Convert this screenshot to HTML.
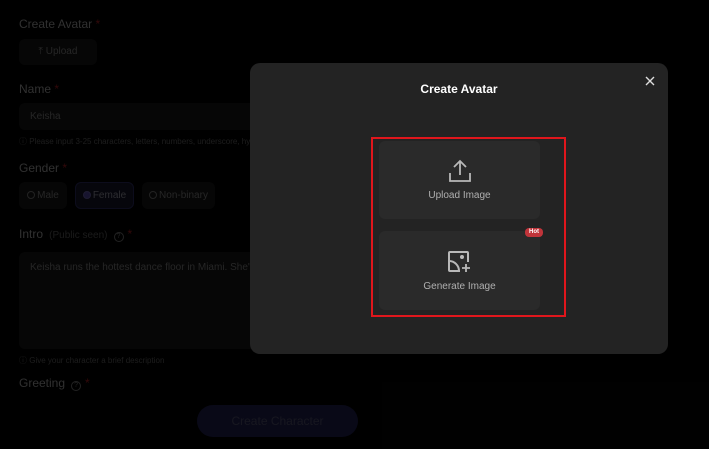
<!DOCTYPE html>
<html><head><meta charset="utf-8"><style>
*{margin:0;padding:0;box-sizing:border-box}
body{width:709px;height:449px;background:#030303;font-family:"Liberation Sans",sans-serif;position:relative;overflow:hidden}
.a{position:absolute}
.lbl{color:#d8d8d8;font-size:12px}
.req{color:#e0262c}
.box{background:#1e1e1e;border-radius:6px}
.hint{color:#808080;font-size:8px}
.ov{left:0;top:0;width:709px;height:449px;background:rgba(0,0,0,0.78)}
.modal{left:250px;top:63px;width:418px;height:291px;background:#232323;border-radius:10px}
.card{background:#2a2a2a;border-radius:6px;width:161px;color:#b0b0b0;font-size:10px;text-align:center}
.rd{display:inline-block;width:8px;height:8px;border:1px solid #999;border-radius:50%;vertical-align:-1px;margin-right:2px}
.q{display:inline-block;width:10px;height:10px;border:1px solid #999;border-radius:50%;font-size:7px;line-height:8px;text-align:center;color:#999;vertical-align:0;margin:0 4px 0 6px}
</style></head><body>
<div class="a lbl" style="left:19px;top:17px">Create Avatar <span class="req">*</span></div>
<div class="a box" style="left:19px;top:39px;width:78px;height:26px;color:#aaa;font-size:10px;line-height:26px;text-align:center">⤒ Upload</div>
<div class="a lbl" style="left:19px;top:82px">Name <span class="req">*</span></div>
<div class="a box" style="left:19px;top:103px;width:240px;height:27px;color:#aaa;font-size:10px;line-height:27px;padding-left:11px">Keisha</div>
<div class="a hint" style="left:19px;top:136px;white-space:nowrap">ⓘ Please input 3-25 characters, letters, numbers, underscore, hy</div>
<div class="a lbl" style="left:19px;top:161px">Gender <span class="req">*</span></div>
<div class="a box" style="left:19px;top:182px;width:48px;height:27px;color:#aaa;font-size:10px;line-height:27px;text-align:center"><span class="rd"></span>Male</div>
<div class="a" style="left:75px;top:182px;width:59px;height:27px;background:#1c1c3a;border:1px solid #3a3a80;border-radius:6px;color:#c8c8d8;font-size:10px;line-height:25px;text-align:center"><span class="rd" style="background:#6b5cd6;border-color:#8a80e0"></span>Female</div>
<div class="a box" style="left:142px;top:182px;width:73px;height:27px;color:#aaa;font-size:10px;line-height:27px;text-align:center"><span class="rd"></span>Non-binary</div>
<div class="a lbl" style="left:19px;top:227px">Intro <span style="color:#777;font-size:10px">&nbsp;(Public seen)</span><span class="q">?</span><span class="req">*</span></div>
<div class="a box" style="left:19px;top:252px;width:240px;height:97px;color:#aaa;font-size:10px;padding:10px 11px;white-space:nowrap">Keisha runs the hottest dance floor in Miami. She's ge</div>
<div class="a hint" style="left:19px;top:355px">ⓘ Give your character a brief description</div>
<div class="a lbl" style="left:19px;top:376px">Greeting<span class="q">?</span><span class="req">*</span></div>
<div class="a" style="left:197px;top:405px;width:161px;height:32px;background:#2a2a6a;border-radius:16px;color:#6a6a90;font-size:12px;line-height:32px;text-align:center">Create Character</div>
<div class="a ov"></div>

<div class="a modal">
  <div class="a" style="left:0;width:418px;top:19px;text-align:center;color:#fff;font-weight:bold;font-size:12px">Create Avatar</div>
  <svg class="a" style="left:395px;top:13px" width="10" height="10" viewBox="0 0 10 10"><path d="M1 1L9 9M9 1L1 9" stroke="#ddd" stroke-width="1.4"/></svg>
  <div class="a" style="left:121px;top:74px;width:195px;height:180px;border:2px solid #e0161c"></div>
  <div class="a card" style="left:129px;top:78px;height:78px">
    <svg class="a" style="left:69px;top:18px" width="24" height="24" viewBox="0 0 24 24" fill="none" stroke="#b8b8b8" stroke-width="1.8"><path d="M12 16V2M6 8l6-6 6 6M2 14v8h20v-8"/></svg>
    <div class="a" style="left:0;width:161px;top:49px">Upload Image</div>
  </div>
  <div class="a card" style="left:129px;top:168px;height:79px">
    <svg class="a" style="left:68px;top:19px" width="25" height="24" viewBox="0 0 25 24" fill="none" stroke="#b8b8b8" stroke-width="2"><path d="M13 21H3a1 1 0 0 1-1-1V3a1 1 0 0 1 1-1h17a1 1 0 0 1 1 1v9"/><path d="M2 11a10 10 0 0 1 10 10"/><circle cx="15" cy="7" r="1" fill="#b8b8b8"/><path d="M19 14v8M15 18h8" stroke-width="1.8"/></svg>
    <div class="a" style="left:0;width:161px;top:50px">Generate Image</div>
  </div>
  <div class="a" style="left:275px;top:165px;width:18px;height:9px;background:#c0343a;border-radius:4px;color:#fff;font-size:6px;line-height:9px;text-align:center;font-weight:bold">Hot</div>
</div>
</body></html>
